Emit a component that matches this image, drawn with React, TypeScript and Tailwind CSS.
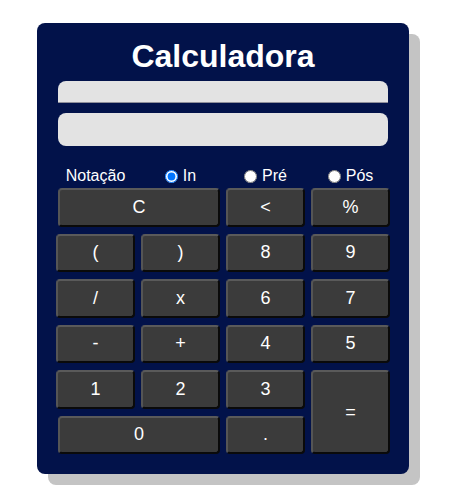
import { useState } from 'react';

const btn =
  'flex items-center justify-center rounded-[4px] border-2 border-t-[#5a5a5a] border-l-[#555555] border-r-[#0a0a0a] border-b-[#0a0a0a] bg-[#3b3b3b] text-[18px] text-white';

export default function App() {
  const [notation, setNotation] = useState('in');

  const keys: { label: string; className?: string }[] = [
    { label: 'C', className: 'col-span-2 ml-[2px]' },
    { label: '<' },
    { label: '%' },
    { label: '(' },
    { label: ')' },
    { label: '8' },
    { label: '9' },
    { label: '/' },
    { label: 'x' },
    { label: '6' },
    { label: '7' },
    { label: '-' },
    { label: '+' },
    { label: '4' },
    { label: '5' },
    { label: '1' },
    { label: '2' },
    { label: '3' },
    { label: '=', className: 'row-span-2' },
    { label: '0', className: 'col-span-2 ml-[2px]' },
    { label: '.' },
  ];

  return (
    <div className="min-h-[504px] bg-white pt-[23px] pl-[37px] font-['Liberation_Sans',Arial,sans-serif]">
      <div className="w-[372px] h-[451px] rounded-lg bg-[#02124a] px-[19px] pt-[15px] shadow-[11px_11px_0_#c4c4c4]">
        <h1 className="text-center text-[32px] font-bold leading-[37px] text-white">
          Calculadora
        </h1>

        {/* VISORES */}
        <div className="mx-[2px] mt-[6px] h-[22px] rounded-t-lg border-b border-b-[#8f8f9a] bg-[#e3e3e3]" />
        <div className="mx-[2px] mt-[10px] h-[33px] rounded-lg bg-[#e3e3e3]" />

        {/* NOTAÇÃO */}
        <div className="mt-[20px] grid h-5 grid-cols-[79px_79px_79px_79px] gap-x-[6px] text-[16px] leading-5 text-white">
          <span className="text-center">Notação</span>
          {[
            { id: 'in', label: 'In' },
            { id: 'pre', label: 'Pré' },
            { id: 'pos', label: 'Pós' },
          ].map((opt) => (
            <label key={opt.id} className="flex items-center justify-center gap-[5px]">
              <input
                type="radio"
                name="notacao"
                checked={notation === opt.id}
                onChange={() => setNotation(opt.id)}
                className="m-0 h-[13px] w-[13px]"
              />
              {opt.label}
            </label>
          ))}
        </div>

        {/* TECLADO */}
        <div className="mt-[2px] grid grid-cols-[79px_79px_79px_79px] auto-rows-[38.5px] gap-x-[6px] gap-y-[7px]">
          {keys.map((k) => (
            <button key={k.label} className={`${btn} ${k.className ?? ''}`}>
              {k.label}
            </button>
          ))}
        </div>
      </div>
    </div>
  );
}
